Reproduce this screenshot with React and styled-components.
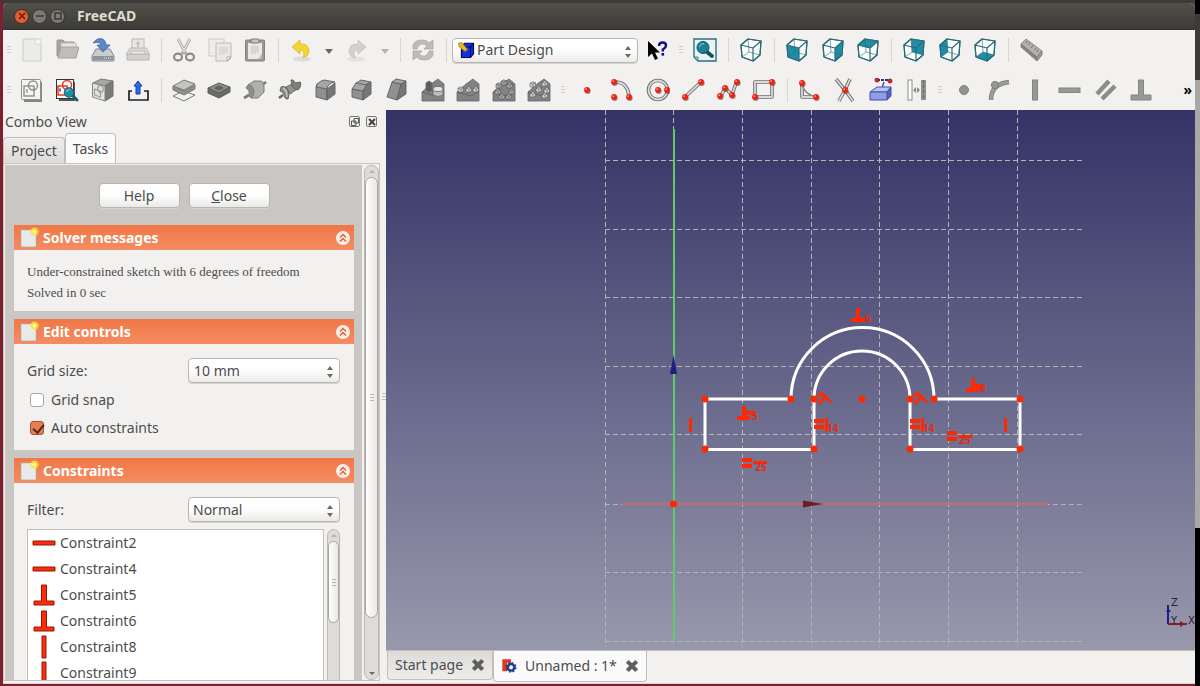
import styled, { createGlobalStyle, css } from "styled-components"

const CUBE = {
    wire: "",
    front: "2,7 14,10 14,23 3,19",
    right: "14,10 22,3 21,17 14,23",
    top: "2,7 9,1 22,3 14,10",
    rear: "9,1 22,3 21,17 10,14",
    left: "2,7 9,1 10,14 3,19",
    bottom: "3,19 10,14 21,17 14,23",
}

const Cube = ({ face }) => (
    <g fill="none" stroke="#2d6a78" strokeWidth="1.2" strokeLinejoin="round">
        <path d="M2 7L9 1L22 3L21 17L14 23L3 19Z" fill="#fbfdfd" />
        {CUBE[face] && <polygon points={CUBE[face]} fill="#1c8ea8" stroke="none" />}
        <path d="M9 1L10 14L3 19M10 14L21 17" strokeWidth="0.6" />
        <path d="M2 7L14 10L14 23L3 19Z M14 10L22 3L21 17L14 23 M2 7L9 1L22 3" />
    </g>
)

const Solid = ({ top, front, side, children }) => (
    <g stroke="#5f5f5f" strokeWidth="0.9" strokeLinejoin="round">
        <path d={front} fill="#909090" />
        <path d={side} fill="#767676" />
        <path d={top} fill="#a5a5a5" />
        {children}
    </g>
)

const Dots = ({ at }) => (
    <g>
        {at.map(([x, y]) => (
            <g key={`${x}-${y}`}>
                <circle cx={x + 0.8} cy={y + 1} r="2.9" fill="#4a4a4a" opacity="0.6" />
                <circle cx={x} cy={y} r="2.9" fill="#ee2211" />
                <circle cx={x - 0.8} cy={y - 0.8} r="0.9" fill="#ff9a88" />
            </g>
        ))}
    </g>
)

const Tube = ({ d }) => (
    <g fill="none" strokeLinejoin="round">
        <path d={d} stroke="#6d6d6d" strokeWidth="3.6" />
        <path d={d} stroke="#d9d9d9" strokeWidth="1.8" />
    </g>
)

const Block = ({ children }) => (
    <g stroke="#666" strokeWidth="0.8" strokeLinejoin="round">
        <path d="M1 14L10 6L17 1L23 6V23H1Z" fill="#828282" />
        <path d="M1 14L15 18L23 13" fill="none" stroke="#5c5c5c" />
        {children}
    </g>
)

const MiniCubes = ({ at, light }) => at.map(([x, y]) => (
    <g key={`${x}-${y}`} strokeWidth="0.7" stroke="#5a5a5a">
        <path d={`M${x} ${y + 1.4}l2.6 -1.6l2.8 1v3l-2.4 1.8l-3 -1z`} fill={light ? "#dcdcdc" : "#b2b2b2"} />
        <path d={`M${x} ${y + 1.4}l3 0.8l2.4 -1.4M${x + 3} ${y + 2.2}v3.2`} fill="none" />
    </g>
))

const icons = {
    newDoc: (
        <g>
            <rect x="3" y="1" width="18" height="22" rx="1" fill="#ececeb" stroke="#c9c8c5" />
            <circle cx="18" cy="4" r="4" fill="#e3e2e0" />
            <circle cx="18" cy="4" r="2" fill="#f6f6f5" />
        </g>
    ),
    open: (
        <g>
            <path d="M2 18V3Q2 2 3 2H8L10 4H19V19Z" fill="#a3a29f" stroke="#979692" />
            <path d="M6 5H21V12H6Z" fill="#e6e5e3" stroke="#bdbcb9" />
            <path d="M3 20L6 9H24L21 20Z" fill="#bfbebb" stroke="#a3a29f" />
        </g>
    ),
    save: (
        <g>
            <path d="M5 11H19L23 18V22Q23 23 22 23H2Q1 23 1 22V18Z" fill="#c9cdd1" stroke="#80858b" />
            <rect x="2" y="18" width="20" height="4" fill="#8d949c" />
            <path d="M13 20H20" stroke="#dfe3e6" strokeDasharray="1 1" />
            <path d="M2 5Q8 -2 13 2Q15 4 15 7H19L12 14L6 7H10Q9 3 2 5Z" fill="#5b89c6" stroke="#3a66a5" strokeWidth="0.8" />
        </g>
    ),
    print: (
        <g stroke="#b7b6b3">
            <rect x="6" y="1" width="12" height="11" fill="#e9e8e6" />
            <path d="M12 3L15 6H13V9H11V6H9Z" fill="#c2c1be" stroke="none" />
            <path d="M4 10H20L23 15V18H1V15Z" fill="#dddcda" />
            <path d="M1 16H23V22H1Z" fill="#d2d1ce" />
            <path d="M5 13H19V16H5Z" fill="#ebeae8" />
        </g>
    ),
    cut: (
        <g fill="none" stroke="#8b8a87">
            <path d="M6 1L14 16M18 1L10 16" stroke="#aaa9a6" strokeWidth="3" />
            <path d="M6 1L13 14M18 1L11 14" stroke="#e4e3e1" strokeWidth="1.4" />
            <ellipse cx="6" cy="19" rx="4" ry="3.4" strokeWidth="2.2" />
            <ellipse cx="18" cy="19" rx="4" ry="3.4" strokeWidth="2.2" />
        </g>
    ),
    copy: (
        <g fill="#eeedeb" stroke="#cccbc8">
            <rect x="1" y="1" width="15" height="17" />
            <path d="M8 5H23V20L20 23H8Z" fill="#e9e8e6" stroke="#bdbcb9" />
            <path d="M11 10H20M11 12H20M11 14H20M11 16H17" stroke="#cfcecb" />
            <path d="M23 19H19V23Z" fill="#fff" stroke="#aaa" />
        </g>
    ),
    paste: (
        <g>
            <rect x="2.5" y="2" width="19" height="21" rx="1" fill="#9a9996" stroke="#83827f" />
            <rect x="5" y="5" width="14" height="16" fill="#e9e8e6" />
            <path d="M8 9H16M8 11H16M8 13H16M8 15H13" stroke="#c6c5c2" />
            <rect x="8" y="1" width="8" height="4" rx="1" fill="#c7c6c3" stroke="#777" />
            <path d="M19 16L15 21H19Z" fill="#bbb" />
        </g>
    ),
    undo: (
        <g>
            <ellipse cx="13" cy="21" rx="9" ry="2.4" fill="#dedcd8" />
            <path d="M3 9L11 2V6Q20 5 20 14Q19 19 14 20Q17 12 11 12V16Z" fill="#f2d635" stroke="#d8b924" strokeWidth="0.8" />
        </g>
    ),
    redo: (
        <g>
            <ellipse cx="11" cy="21" rx="9" ry="2.4" fill="#e3e2df" />
            <path d="M21 9L13 2V6Q4 5 4 14Q5 19 10 20Q7 12 13 12V16Z" fill="#d2d1ce" stroke="#c2c1be" strokeWidth="0.8" />
        </g>
    ),
    refresh: (
        <g fill="#bdbcb9" stroke="#a9a8a5" strokeWidth="0.8">
            <path d="M2 11V7Q4 2 11 2Q16 2 18 5L22 2V11H13L16 8Q13 5 10 6Q7 7 6 11Z" />
            <path d="M22 13V17Q20 22 13 22Q8 22 6 19L2 22V13H11L8 16Q11 19 14 18Q17 17 18 13Z" />
        </g>
    ),
    whatsThis: (
        <g>
            <path d="M3 3V19L7 15.500L10 22L13 20.500L10 14.500H15Z" fill="#000" />
            <path d="M14 8Q14 4.500 17.500 4.500Q21 4.500 21 7.500Q21 9.500 17.800 11.500V13.500" fill="none" stroke="#10108a" strokeWidth="2.4" />
            <rect x="16.500" y="15" width="2.600" height="2.600" fill="#10108a" />
        </g>
    ),
    zoomFit: (
        <g>
            <path d="M1 1H23V23H5L1 19Z" fill="#e9f3f5" stroke="#2b7180" strokeWidth="1.4" />
            <path d="M1 19H5V23Z" fill="#9cc" stroke="#2b7180" strokeWidth="0.8" />
            <path d="M14 14L19 18" stroke="#17505e" strokeWidth="3.8" strokeLinecap="round" />
            <circle cx="10" cy="9.500" r="6" fill="#1c8198" stroke="#0f5364" />
            <path d="M6 9Q7 5.500 11 5.500" stroke="#8fd0dd" fill="none" />
        </g>
    ),
    wire: <Cube face="wire" />,
    front: <Cube face="front" />,
    top: <Cube face="top" />,
    right: <Cube face="right" />,
    rear: <Cube face="rear" />,
    left: <Cube face="left" />,
    bottom: <Cube face="bottom" />,
    measure: (
        <g stroke="#7f7f7d" strokeWidth="0.9" strokeLinejoin="round">
            <path d="M2 6L7 1L23 13L18 19Z" fill="#b3b2af" />
            <path d="M2 6L18 19V23L2 9Z" fill="#858482" />
            <path d="M18 19L23 13V17L18 23Z" fill="#999895" />
            <path d="M8 3L7 5M11 5L9.500 7M14 7.500L12 10M17 10L15.500 12M19 12L18 14" stroke="#666" />
        </g>
    ),
    newSketch: (
        <g>
            <path d="M4 4H22V24H4Z" fill="#858583" />
            <rect x="1.500" y="1.500" width="19" height="20" rx="1" fill="#f4f4f3" stroke="#8e8e8c" />
            <g fill="none" stroke="#8e8e8c" strokeWidth="1.400">
                <circle cx="13" cy="7.500" r="4.500" />
                <rect x="4" y="8" width="10" height="10" />
                <path d="M7 11V15M6 13H8" strokeWidth="1" />
            </g>
        </g>
    ),
    editSketch: (
        <g>
            <path d="M4 4H20V23H4Z" fill="#555" />
            <rect x="1.500" y="1.500" width="17" height="19" fill="#fff" stroke="#333" />
            <g fill="none" stroke="#ee3322" strokeWidth="1.500">
                <circle cx="12" cy="7" r="4.500" />
                <rect x="3" y="8" width="9" height="9" />
            </g>
            <path d="M5 10V14M4 12H6" stroke="#333" strokeWidth="0.8" />
            <path d="M17 17L22 22" stroke="#17606f" strokeWidth="3" strokeLinecap="round" />
            <circle cx="14" cy="14.500" r="4.800" fill="#1f91a6" stroke="#146475" />
            <path d="M11.500 14Q12 11.500 14.500 11.500" stroke="#a0dde8" fill="none" />
        </g>
    ),
    mapSketch: (
        <g strokeLinejoin="round">
            <path d="M2 5L10 1L22 3L14 8Z" fill="#a6a6a4" stroke="#777" />
            <path d="M14 8L22 3V18L14 23Z" fill="#7a7a78" stroke="#6b6b6a" />
            <path d="M1.500 5L14 8V23L1.500 19Z" fill="#e2e2e1" stroke="#858583" />
            <g fill="none" stroke="#9b9b99" strokeWidth="1.200">
                <ellipse cx="9.500" cy="11" rx="2.800" ry="3.400" />
                <path d="M3.500 11L9.500 13V19L3.500 17Z" />
            </g>
        </g>
    ),
    leave: (
        <g>
            <path d="M6 13H3V22H22V13H18" fill="none" stroke="#222" strokeWidth="1.700" />
            <path d="M12 3L16 8H14V16H10V8H8Z" fill="#2a6cf0" stroke="#123a9c" />
        </g>
    ),
    pad: (
        <g stroke="#7a7a78" strokeLinejoin="round">
            <path d="M1 18L11 13L23 17L12 23Z" fill="#f0f0ef" />
            <path d="M1 8V12L12 17L23 11V7L12 13Z" fill="#8f8f8d" />
            <path d="M1 8L12 2L23 6L12 12Z" fill="#c4c4c2" />
        </g>
    ),
    pocket: (
        <g stroke="#5a5a59" strokeLinejoin="round">
            <path d="M1 10V15L12 20L23 14V9L12 14Z" fill="#6b6b6a" />
            <path d="M1 10L12 5L23 9L12 15Z" fill="#8c8c8a" />
            <path d="M8 10L12 8L16 10L12 12Z" fill="#686868" />
        </g>
    ),
    revolution: (
        <g stroke="#7b7b79" strokeLinejoin="round">
            <path d="M1 20L6 17M19 7L23 4" strokeWidth="2.800" />
            <path d="M5 7L11 3H18Q21 4 21 8V14L15 20H8Q11 15 10 11Q8 7 5 7Z" fill="#b0b0ae" />
            <path d="M5 7Q10 7 11 13Q11 18 8 20L6 17Q7 12 3 10Z" fill="#8d8d8b" />
        </g>
    ),
    groove: (
        <g stroke="#666665" strokeLinejoin="round">
            <path d="M1 20L5 17M20 6L23 5" strokeWidth="2.600" />
            <path d="M8 9L14 6L19 11L12 16Z" fill="#939391" />
            <path d="M13 2Q16 1 17 5L22 4Q24 9 20 12Q16 12 14 8Z" fill="#7f7f7d" />
            <path d="M3 9Q7 7 10 12Q12 17 10 21Q7 22 6 17Q5 13 2 13Z" fill="#8b8b89" />
            <path d="M5 10Q9 12 9 19" fill="none" stroke="#c4c4c2" strokeWidth="1.400" />
        </g>
    ),
    fillet: <Solid front="M2 9Q2 5 6 5L13 10V22L2 19Z" side="M13 11L21 5V16L13 22Z" top="M2 9Q3 4 10 2L21 4Q14 5 13 11Z" />,
    chamfer: <Solid front="M2 11L13 13V22L2 19Z" side="M13 13L17 6L21 4V16L13 22Z" top="M2 11L6 5L11 2L21 4L17 6L13 13Z"><path d="M6 5L17 7" fill="none" /></Solid>,
    draft: <Solid front="M7 4L16 6L12 22L2 19Z" side="M16 6L21 3V16L12 22Z" top="M7 4L11 1L21 3L16 6Z" />,
    mirrored: (
        <Block>
            <path d="M5 5L8 3L11 5V12L8 14L5 12Z" fill="#5d5d5c" />
            <path d="M12 11V17Q17 20 22 17V11" fill="#bdbdbb" />
            <ellipse cx="17" cy="11" rx="5" ry="2.500" fill="#e6e6e5" />
        </Block>
    ),
    linear: <Block><MiniCubes at={[[2, 9], [10, 9], [17, 9]]} light /></Block>,
    polar: <Block><MiniCubes at={[[9, 2], [4, 5], [15, 5], [3, 11], [17, 11], [7, 16], [14, 16]]} /></Block>,
    multi: <Block><MiniCubes at={[[3, 4], [9, 9], [15, 3], [3, 14], [15, 15], [17, 10]]} light /></Block>,
    point: <Dots at={[[12, 12]]} />,
    arc: <g><Tube d="M5 4Q18 4 19 19" /><Dots at={[[4, 4], [4, 19], [19, 19]]} /></g>,
    circle: <g><g fill="none"><circle cx="12" cy="12" r="9.500" stroke="#6d6d6d" strokeWidth="3.600" /><circle cx="12" cy="12" r="9.500" stroke="#d9d9d9" strokeWidth="1.800" /></g><Dots at={[[12, 12], [21, 12]]} /></g>,
    line: <g><Tube d="M4 19L20 4" /><Dots at={[[4, 19], [20, 4]]} /></g>,
    polyline: <g><Tube d="M4 18L8 10L15 17L19 5" /><Dots at={[[3, 18], [8, 10], [15, 17], [20, 4]]} /></g>,
    rect: <g><Tube d="M3 4H20V19H3Z" /><Dots at={[[20, 4], [3, 19]]} /></g>,
    filletSk: <g><Tube d="M4 4V19H20" /><path d="M4 4Q5 17 20 19" fill="none" stroke="#888" strokeWidth="1.600" /><Dots at={[[4, 5], [18, 19]]} /></g>,
    trim: <g><Tube d="M3 1L12 12L20 23" /><Tube d="M17 1L12 12L6 23" /><Dots at={[[12, 12]]} /></g>,
    external: (
        <g stroke="#4350a8">
            <path d="M8 2H21" stroke="#223388" strokeWidth="2" strokeDasharray="3 1" />
            <path d="M15 4L13 10" strokeWidth="1.500" />
            <path d="M1 14L8 9H22L18 14Z" fill="#b9c2f5" />
            <path d="M18 14L22 9V18L18 22Z" fill="#5463bd" />
            <path d="M1 14H18V22H1Z" fill="#8f9ce8" />
            <circle cx="8" cy="2" r="2" fill="#e22" stroke="#822" />
            <circle cx="21" cy="3" r="2" fill="#e22" stroke="#822" />
        </g>
    ),
    carbon: (
        <g>
            <rect x="4" y="2" width="4" height="20" fill="#fff" stroke="#8b8b89" />
            <path d="M9 12L12 9V15ZM16 12L13 9V15Z" fill="#888" />
            <rect x="17" y="2" width="5" height="20" fill="#8e8e8c" />
            <path d="M19.500 2V22" stroke="#666" strokeDasharray="3 2" />
        </g>
    ),
    cPoint: <circle cx="12" cy="12" r="4.500" fill="#939391" stroke="#7d7d7b" />,
    cOnObject: (
        <g>
            <path d="M4 22Q4 6 22 4" fill="none" stroke="#7d7d7b" strokeWidth="4.500" />
            <path d="M4 22Q4 6 22 4" fill="none" stroke="#9b9b99" strokeWidth="3" />
            <circle cx="8" cy="7" r="3.600" fill="#989896" stroke="#7d7d7b" />
        </g>
    ),
    cVertical: <rect x="9.500" y="2" width="5" height="20" fill="#989896" stroke="#848482" />,
    cHorizontal: <rect x="1" y="10" width="21" height="4.500" fill="#989896" stroke="#848482" />,
    cParallel: <path d="M3 16L15 3M8 21L21 8" stroke="#8c8c8a" strokeWidth="4.500" fill="none" />,
    cPerp: <path d="M9.500 2H14.500V17H22V22H2V17H9.500Z" fill="#989896" stroke="#848482" />,
    partDesign: (
        <g stroke="#000a5a">
            <path d="M6 8L10 3H22V17L18 22H6Z" fill="#1430e0" strokeWidth="1.600" />
            <path d="M6 8H18V22M18 8L22 3" fill="none" strokeWidth="1.600" />
            <path d="M2 3L6 2L14 11L11 14L3 8Z" fill="#e8b820" stroke="#a07810" />
        </g>
    ),
    horizontal: <path d="M1 10H23V14H1Z" fill="#ff2a0a" stroke="#8c1a08" />,
    vertical: <path d="M10 1H14V23H10Z" fill="#ff2a0a" stroke="#8c1a08" />,
    perpendicular: <path d="M9.500 2H14.500V18H22V22H2V18H9.500Z" fill="#ff2a0a" stroke="#8c1a08" />,
    paper: (
        <g>
            <path d="M3 3H20V22H3Z" fill="#e9e9e8" stroke="#b79480" />
            <circle cx="18" cy="5" r="4.500" fill="#f7e63a" opacity="0.8" />
            <circle cx="18" cy="5" r="2" fill="#fffb9a" />
        </g>
    ),
    freecad: (
        <g>
            <path d="M2 2H15V7H9V10H13V14H9V20H2Z" fill="#e8341c" />
            <circle cx="15" cy="14" r="5" fill="none" stroke="#1c3f94" strokeWidth="3.600" />
            <circle cx="15" cy="14" r="7" fill="none" stroke="#1c3f94" strokeWidth="2.400" strokeDasharray="2.750 2.750" />
        </g>
    ),
    cross: <path d="M4 4L20 20M20 4L4 20" stroke="#5f5f5d" strokeWidth="7" />,
}

const Icon = ({ name, size = 24 }) => (
    <svg width={size} height={size} viewBox="0 0 24 24" aria-hidden="true">{icons[name]}</svg>
)

const Tools = ({ items }) => (
    <ToolGroup $count={items.length}>
        {items.map(name => (
            <ToolButton key={name} type="button" aria-label={name}><Icon name={name} /></ToolButton>
        ))}
    </ToolGroup>
)

const Arrows = () => (
    <ArrowsIcon width="8" height="14" viewBox="0 0 8 14" aria-hidden="true">
        <path d="M1 5L4 1L7 5ZM1 9L4 13L7 9Z" fill="#6a6966" />
    </ArrowsIcon>
)

const TaskBox = ({ title, fill, children }) => (
    <Box $fill={fill}>
        <BoxHeader>
            <Icon name="paper" size={22} />
            <BoxTitle>{title}</BoxTitle>
            <Collapse type="button" aria-label={`Collapse ${title}`}>
                <svg width="14" height="14" viewBox="0 0 14 14">
                    <circle cx="7" cy="7" r="7" fill="#fbeee8" />
                    <path d="M4 6.500L7 3.500L10 6.500M4 10.500L7 7.500L10 10.500" fill="none" stroke="#e0623a" strokeWidth="1.500" />
                </svg>
            </Collapse>
        </BoxHeader>
        <BoxBody>{children}</BoxBody>
    </Box>
)

const constraints = [
    ["Constraint2", "horizontal"],
    ["Constraint4", "horizontal"],
    ["Constraint5", "perpendicular"],
    ["Constraint6", "perpendicular"],
    ["Constraint8", "vertical"],
    ["Constraint9", "vertical"],
]

const points = [
    [705, 399], [791, 399], [814, 399], [862, 399], [910, 399], [934, 399],
    [1020, 399], [705, 449], [814, 449], [910, 449], [1020, 449], [673.5, 504],
]

const Sketch = () => (
    <Canvas role="img" aria-label="Sketch">
        <g transform="translate(-386 -110)">
            <g stroke="#b3b3b3" strokeDasharray="5 3" shapeRendering="crispEdges">
                {[605, 673, 742, 811, 879, 948, 1017].map(x => (
                    <line key={x} x1={x + 0.5} x2={x + 0.5} y1="110" y2="647" />
                ))}
                {[160, 229, 297, 366, 434, 504, 572, 641].map(y => (
                    <line key={y} x1="605" x2="1082" y1={y + 0.5} y2={y + 0.5} />
                ))}
            </g>
            <line x1="622" x2="1048" y1="504" y2="504" stroke="#c46872" strokeWidth="2" />
            <line x1="674" x2="674" y1="129" y2="641" stroke="#63cb63" strokeWidth="2" />
            <path d="M673.500 355L677 374H670Z" fill="#1f1f80" />
            <path d="M803 500.500L823 504L803 507.500Z" fill="#6e1d22" />
            <g fill="none" stroke="#fff" strokeWidth="3">
                <path d="M791 399H705V449.500H814V399A48 48 0 0 1 910 399V449.500H1020V399H934" />
                <path d="M791 399A71.500 71.500 0 0 1 934 399" />
            </g>
            <g fill="#ff2800">
                {points.map(([x, y]) => <circle key={`${x}-${y}`} cx={x} cy={y} r="3.500" />)}
                <path d="M689 418h3v14h-3zM1004 418h3v14h-3z" />
                <path d="M856 308h4v10h5v4h-14v-4h5zM742 406h4v10h4v4h-13v-4h5zM971 378h4v10h4v4h-13v-4h5z" />
                <path d="M745 411h10v4h-10zM973 384h10v4h-10z" />
                <path d="M742 458h10v4h-10zM742 464h10v4h-10zM753 461h14v3h-14z" />
                <path d="M947 431h10v4h-10zM947 437h10v4h-10zM958 435h14v3h-14z" />
                <path d="M814 419h10v4h-10zM814 425h10v4h-10zM825 418h3v14h-3z" />
                <path d="M910 419h10v4h-10zM910 425h10v4h-10zM921 418h3v14h-3z" />
            </g>
            <g fill="none" stroke="#ff2800" strokeWidth="3">
                <path d="M817 395L822 394L831 402M819 404L826 395M913 395L918 394L927 402M915 404L922 395" />
            </g>
            <SketchLabel x="865" y="322">6</SketchLabel>
            <SketchLabel x="752" y="420">5</SketchLabel>
            <SketchLabel x="980" y="392">6</SketchLabel>
            <SketchLabel x="827" y="432">14</SketchLabel>
            <SketchLabel x="923" y="432">14</SketchLabel>
            <SketchLabel x="755" y="471">25</SketchLabel>
            <SketchLabel x="959" y="444">25</SketchLabel>
            <path d="M1168 605V624" stroke="#1d1d8a" strokeWidth="2" />
            <path d="M1166 612L1168 608L1171 612Z" fill="#1d1d8a" />
            <path d="M1168 624H1187" stroke="#8a1d22" strokeWidth="2" />
            <path d="M1180 621L1185 624L1180 627Z" fill="#8a1d22" />
            <AxisLabel x="1171" y="606">Z</AxisLabel>
            <AxisLabel x="1171" y="624">Y</AxisLabel>
            <AxisLabel x="1188" y="624">X</AxisLabel>
        </g>
    </Canvas>
)

const App = () => (
    <Desktop>
        <GlobalStyle />
        <Window>
            <TitleBar>
                <WinButton type="button" aria-label="Close window" $close>
                    <svg width="8" height="8" viewBox="0 0 8 8"><path d="M1 1L7 7M7 1L1 7" stroke="#5a2010" strokeWidth="1.500" /></svg>
                </WinButton>
                <WinButton type="button" aria-label="Minimize">
                    <svg width="8" height="8" viewBox="0 0 8 8"><path d="M0 4H8" stroke="#3a3935" strokeWidth="1.500" /></svg>
                </WinButton>
                <WinButton type="button" aria-label="Maximize">
                    <svg width="8" height="8" viewBox="0 0 8 8"><path d="M1 1H7V7H1Z" fill="none" stroke="#3a3935" strokeWidth="1.500" /></svg>
                </WinButton>
                <WinTitle>FreeCAD</WinTitle>
            </TitleBar>
            <Toolbar>
                <Grip />
                <Tools items={["newDoc", "open", "save", "print"]} />
                <Divider />
                <Tools items={["cut", "copy", "paste"]} />
                <Divider />
                <Tools items={["undo"]} />
                <MenuArrow type="button" aria-label="Undo history" />
                <Tools items={["redo"]} />
                <MenuArrow type="button" aria-label="Redo history" $faded />
                <Divider />
                <Tools items={["refresh"]} />
                <Divider />
                <Workbench>
                    <WorkbenchIcon><Icon name="partDesign" size={18} /></WorkbenchIcon>
                    <Select aria-label="Workbench" $icon defaultValue="Part Design">
                        <option>Part Design</option>
                    </Select>
                    <Arrows />
                </Workbench>
                <Tools items={["whatsThis"]} />
                <Grip />
                <Tools items={["zoomFit"]} />
                <Divider />
                <Tools items={["wire"]} />
                <Divider />
                <Tools items={["front", "right", "top"]} />
                <Divider />
                <Tools items={["rear", "left", "bottom"]} />
                <Divider />
                <Tools items={["measure"]} />
            </Toolbar>
            <Toolbar>
                <Grip />
                <Tools items={["newSketch", "editSketch", "mapSketch", "leave"]} />
                <Divider />
                <Tools items={["pad", "pocket", "revolution", "groove", "fillet", "chamfer", "draft", "mirrored", "linear", "polar", "multi"]} />
                <Grip />
                <Tools items={["point", "arc", "circle", "line", "polyline", "rect"]} />
                <Divider />
                <Tools items={["filletSk", "trim", "external", "carbon"]} />
                <Grip />
                <Tools items={["cPoint", "cOnObject", "cVertical", "cHorizontal", "cParallel", "cPerp"]} />
                <More type="button">»</More>
            </Toolbar>
            <Main>
                <ComboView>
                    <DockTitle>
                        <span>Combo View</span>
                        <DockButton type="button" aria-label="Float">
                            <svg width="8" height="8" viewBox="0 0 8 8"><path d="M3 0.500H7.500V5H3ZM0.500 3H5V7.500H0.500Z" fill="none" stroke="#555" /></svg>
                        </DockButton>
                        <DockButton type="button" aria-label="Close dock">
                            <svg width="8" height="8" viewBox="0 0 8 8"><path d="M1 1L7 7M7 1L1 7" stroke="#444" strokeWidth="2" /></svg>
                        </DockButton>
                    </DockTitle>
                    <Tabs role="tablist">
                        <Tab type="button" role="tab">Project</Tab>
                        <Tab type="button" role="tab" aria-selected="true" $active>Tasks</Tab>
                    </Tabs>
                    <TabPane>
                        <Tasks>
                            <ButtonRow>
                                <PushButton type="button">Help</PushButton>
                                <PushButton type="button"><u>C</u>lose</PushButton>
                            </ButtonRow>
                            <TaskBox title="Solver messages">
                                <Message>Under-constrained sketch with 6 degrees of freedom<br />Solved in 0 sec</Message>
                            </TaskBox>
                            <TaskBox title="Edit controls">
                                <Field>
                                    <label htmlFor="grid-size">Grid size:</label>
                                    <Combo>
                                        <TextInput id="grid-size" defaultValue="10 mm" />
                                        <Arrows />
                                    </Combo>
                                </Field>
                                <Check><CheckInput type="checkbox" />Grid snap</Check>
                                <Check><CheckInput type="checkbox" defaultChecked />Auto constraints</Check>
                            </TaskBox>
                            <TaskBox title="Constraints" fill>
                                <Field>
                                    <label htmlFor="filter">Filter:</label>
                                    <Combo>
                                        <Select id="filter" defaultValue="Normal"><option>Normal</option></Select>
                                        <Arrows />
                                    </Combo>
                                </Field>
                                <ListArea>
                                    <List>
                                        {constraints.map(([name, icon]) => (
                                            <ListItem key={name}><Icon name={icon} />{name}</ListItem>
                                        ))}
                                    </List>
                                    <ScrollTrack $width={13}>
                                        <ScrollArrow />
                                        <ScrollThumb $length="82px" />
                                    </ScrollTrack>
                                </ListArea>
                            </TaskBox>
                        </Tasks>
                        <ScrollTrack $width={15}>
                            <ScrollArrow />
                            <ScrollThumb $length="86%" />
                            <ScrollArrow $down />
                        </ScrollTrack>
                    </TabPane>
                </ComboView>
                <Splitter />
                <Workspace>
                    <Sketch />
                    <DocTabs role="tablist">
                        <DocTab role="tab">
                            Start page
                            <TabClose type="button" aria-label="Close Start page"><Icon name="cross" size={14} /></TabClose>
                        </DocTab>
                        <DocTab role="tab" aria-selected="true" $active>
                            <Icon name="freecad" size={16} />
                            Unnamed : 1*
                            <TabClose type="button" aria-label="Close Unnamed"><Icon name="cross" size={14} /></TabClose>
                        </DocTab>
                    </DocTabs>
                </Workspace>
            </Main>
        </Window>
    </Desktop>
)

const GlobalStyle = createGlobalStyle`
    * {
        box-sizing: border-box;
    }

    body {
        margin: 0;
        overflow: hidden;
        color: #4c4c4c;
        font: 14px/20px "Noto Sans", "Open Sans", sans-serif;
    }

    button, input, select {
        margin: 0;
        padding: 0;
        border: 0;
        background: none;
        color: inherit;
        font: inherit;
    }

    svg {
        display: block;
        flex: none;
    }
`

const control = css`
    border: 1px solid #b9b6b1;
    border-radius: 4px;
    background: linear-gradient(#ffffff, #fdfdfd 50%, #ebeae8);
    box-shadow: 0 1px 0 #d5d3d0;
`

const Desktop = styled.div`
    height: 100vh;
    padding: 3px 5px 2px 3px;
    background: linear-gradient(#000 14px, #3c3b37 14px 80px, #a9a8a5 80px 528px, #000 528px) right / 5px 100% no-repeat,
        linear-gradient(#3c3b37 3px, #7c2030 3px);
`

const Window = styled.div`
    display: flex;
    flex-direction: column;
    height: 100%;
    overflow: hidden;
    border-bottom: 1px solid #d8d6d3;
    border-radius: 5px 5px 0 0;
    background: #f2f1f0;
`

const TitleBar = styled.header`
    display: flex;
    flex: none;
    align-items: center;
    gap: 3px;
    height: 27px;
    padding-left: 11px;
    border-bottom: 1px solid #34332f;
    background: linear-gradient(#514f49, #3d3c38);
`

const WinButton = styled.button`
    display: flex;
    align-items: center;
    justify-content: center;
    width: 15px;
    height: 15px;
    border: 1px solid #33322e;
    border-radius: 50%;
    background: ${props => props.$close ? "#ea5a2c" : "#7b7a73"};
`

const WinTitle = styled.h1`
    margin: 0 0 0 9px;
    color: #dfdbd2;
    font-size: 14px;
    font-weight: 700;
    line-height: 20px;
`

const Toolbar = styled.div`
    display: flex;
    flex: none;
    align-items: center;
    height: 40px;
    padding-right: 3px;
`

const ToolGroup = styled.div`
    display: flex;
    flex: none;
    width: ${props => Math.round(props.$count * 35.5)}px;
`

const ToolButton = styled.button`
    display: flex;
    flex: 1;
    justify-content: center;
`

const Divider = styled.div`
    flex: none;
    width: 10px;
    height: 24px;
    background: linear-gradient(#d8d6d3, #d8d6d3) center / 1px 100% no-repeat;
`

const Grip = styled.div`
    flex: none;
    width: 12px;
    height: 8px;
    background: repeating-linear-gradient(#d0cecb 0 1px, transparent 1px 3px) center / 4px 100% no-repeat;

    &:first-child {
        width: 11px;
    }
`

const MenuArrow = styled.button`
    flex: none;
    width: 20px;
    height: 24px;

    &::before {
        content: "";
        display: block;
        width: 0;
        margin: 2px auto 0;
        border: 4px solid transparent;
        border-top: 5px solid ${props => props.$faded ? "#b5b3b0" : "#6a6966"};
        border-bottom: 0;
    }
`

const More = styled.button`
    margin-left: auto;
    color: #000;
    font-weight: 700;
`

const Combo = styled.div`
    ${control}
    position: relative;
    width: 152px;
    height: 25px;
`

const Workbench = styled(Combo)`
    flex: none;
    width: 186px;
    margin: 0 1px;
`

const WorkbenchIcon = styled.span`
    position: absolute;
    top: 2px;
    left: 4px;
`

const ArrowsIcon = styled.svg`
    position: absolute;
    top: 6px;
    right: 5px;
    pointer-events: none;
`

const Select = styled.select`
    width: 100%;
    height: 23px;
    padding-left: ${props => props.$icon ? 24 : 4}px;
    appearance: none;
`

const TextInput = styled.input`
    width: 100%;
    height: 23px;
    padding-left: 5px;
`

const Main = styled.main`
    display: flex;
    flex: 1;
    min-height: 0;
`

const ComboView = styled.section`
    display: flex;
    flex: none;
    flex-direction: column;
    width: 377px;
    padding-bottom: 2px;
`

const DockTitle = styled.div`
    display: flex;
    flex: none;
    align-items: center;
    gap: 6px;
    height: 23px;
    padding: 0 3px 0 2px;

    span {
        flex: 1;
    }
`

const DockButton = styled.button`
    display: flex;
    align-items: center;
    justify-content: center;
    width: 11px;
    height: 11px;
    border: 1px solid #77756f;
    border-radius: 2px;
`

const Tabs = styled.div`
    display: flex;
    flex: none;
    align-items: flex-end;
    height: 30px;
`

const Tab = styled.button`
    height: ${props => props.$active ? 30 : 26}px;
    padding: 0 7px;
    border: 1px solid #c2bfbb;
    border-bottom: 0;
    border-radius: 4px 4px 0 0;
    background: ${props => props.$active ? "#fafafa" : "linear-gradient(#eeedeb, #dddbd9)"};
`

const TabPane = styled.div`
    display: flex;
    flex: 1;
    gap: 2px;
    min-height: 0;
    padding: 1px 0 0 1px;
    border: 1px solid #c8c5c1;
`

const Tasks = styled.div`
    display: flex;
    flex: 1;
    flex-direction: column;
    gap: 8px;
    overflow: hidden;
    padding: 0 8px 0 9px;
    background: #cac6c3;
`

const ButtonRow = styled.div`
    display: flex;
    flex: none;
    gap: 9px;
    justify-content: center;
    padding: 18px 0 9px;
`

const PushButton = styled.button`
    ${control}
    width: 81px;
    height: 25px;
`

const Box = styled.section`
    flex: ${props => props.$fill ? 1 : "none"};
    background: #f2f1f0;
`

const BoxHeader = styled.header`
    display: flex;
    align-items: center;
    gap: 3px;
    height: 25px;
    padding: 0 4px;
    background: linear-gradient(#f07746, #f58c62);
`

const BoxTitle = styled.h2`
    flex: 1;
    margin: 0;
    color: #fff;
    font-size: 14px;
    font-weight: 700;
    line-height: 20px;
`

const Collapse = styled.button`
    display: flex;
`

const BoxBody = styled.div`
    padding: 11px 14px 8px 13px;
`

const Message = styled.p`
    margin: 0;
    font: 13px/21px "Liberation Serif", serif;
`

const Field = styled.div`
    display: flex;
    align-items: center;
    justify-content: space-between;
    margin: 3px 0;
`

const Check = styled.label`
    display: flex;
    align-items: center;
    gap: 7px;
    height: 28px;
    padding-left: 3px;
`

const CheckInput = styled.input`
    width: 14px;
    height: 14px;
    border: 1px solid #a9a6a1;
    border-radius: 3px;
    background: #fff;
    appearance: none;

    &:checked {
        border-color: #a1563c;
        background: #ee7c50;
    }

    &:checked::before {
        content: "";
        display: block;
        width: 5px;
        height: 9px;
        margin-left: 4px;
        border: solid #4b2a20;
        border-width: 0 2px 2px 0;
        transform: rotate(40deg);
    }
`

const ListArea = styled.div`
    display: flex;
    gap: 3px;
    height: 180px;
    margin-top: 7px;
`

const List = styled.ul`
    flex: 1;
    margin: 0;
    padding: 0 4px;
    border: 1px solid #c2bfbb;
    background: #fff;
    list-style: none;
`

const ListItem = styled.li`
    display: flex;
    align-items: center;
    gap: 4px;
    height: 26px;
`

const ScrollTrack = styled.div`
    display: flex;
    flex: none;
    flex-direction: column;
    width: ${props => props.$width}px;
    border: 1px solid #bdbab6;
    border-radius: 7px;
    background: #dedcda;
`

const ScrollArrow = styled.div`
    flex: none;
    height: 11px;

    &::before {
        content: "";
        display: block;
        width: 0;
        margin: 4px auto 0;
        border: 3px solid transparent;
        border-${props => props.$down ? "top" : "bottom"}-color: ${props => props.$down ? "#6a6966" : "#b5b3b0"};
        border-${props => props.$down ? "bottom" : "top"}: 0;
    }

    ${props => props.$down && css`
        margin-top: auto;
    `}
`

const ScrollThumb = styled.div`
    height: ${props => props.$length};
    border: 1px solid #a9a6a2;
    border-radius: 7px;
    background:
        repeating-linear-gradient(#b5b3b0 0 1px, transparent 1px 3px) center / 4px 7px no-repeat,
        linear-gradient(90deg, #fff, #e9e8e6);
`

const Splitter = styled.div`
    flex: none;
    width: 6px;
    background: repeating-linear-gradient(#c2c0bc 0 1px, transparent 1px 3px) 2px 50% / 4px 7px no-repeat;
`

const Workspace = styled.section`
    display: flex;
    flex: 1;
    flex-direction: column;
    min-width: 0;
`

const Canvas = styled.svg`
    flex: 1;
    width: 100%;
    min-height: 0;
    background: linear-gradient(#333366, #9898ad);
`

const SketchLabel = styled.text`
    fill: #e02a14;
    font: 700 10px "Noto Sans", sans-serif;
`

const AxisLabel = styled.text`
    fill: #222230;
    font: 10px "DejaVu Sans", sans-serif;
`

const DocTabs = styled.div`
    display: flex;
    flex: none;
    align-items: flex-start;
    height: 33px;
    padding-left: 1px;
    border-top: 1px solid #c2bfbb;
`

const DocTab = styled.div`
    display: flex;
    align-items: center;
    gap: 8px;
    height: ${props => props.$active ? 31 : 29}px;
    padding: 0 7px;
    border: 1px solid #c2bfbb;
    border-top: 0;
    border-radius: 0 0 4px 4px;
    background: ${props => props.$active ? "#fafafa" : "linear-gradient(#dddbd9, #eeedeb)"};
`

const TabClose = styled.button`
    display: flex;
`

export default App
